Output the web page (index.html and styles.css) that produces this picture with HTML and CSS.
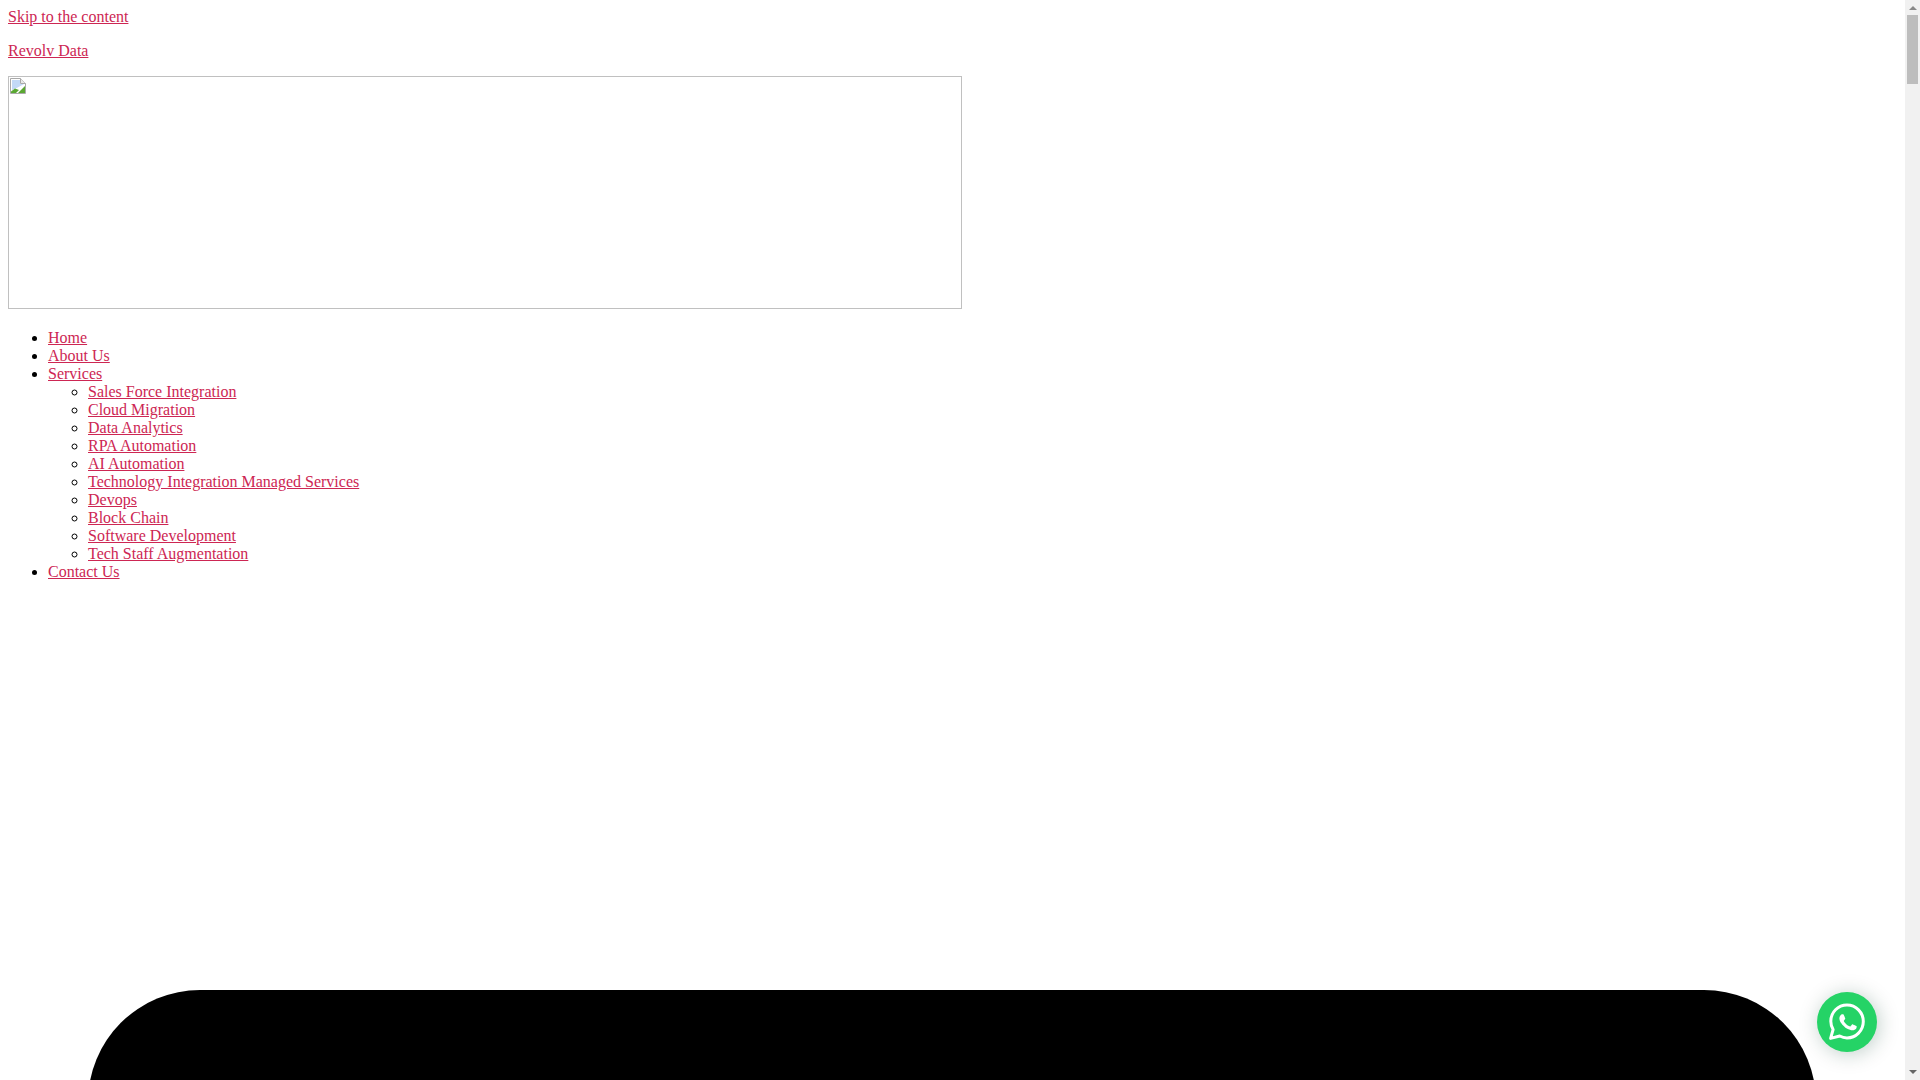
FILE: index.html
```
<!DOCTYPE html>
<html lang="en">
<head>
<meta charset="utf-8">
<title>Revolv Data</title>
<link rel="stylesheet" href="styles.css">
</head>
<body>
<div class="page">
  <a href="#content">Skip to the content</a>
  <p class="site-title"><a href="#home">Revolv Data</a></p>
  <div class="logo">
    <svg class="broken" width="16" height="16" viewBox="0 0 16 16" aria-hidden="true">
      <path d="M0.5 0.5H10.5L15.5 5.5V15.5H0.5Z" fill="#fff" stroke="#a9a9a9"/>
      <path d="M10.5 0.5V5.5H15.5" fill="#e8e8e8" stroke="#a9a9a9"/>
      <path d="M2 2H10V6H14V8L2 12Z" fill="#c3d9f7"/>
      <path d="M1 15V13L5 11L14 6V8L8 15Z" fill="#fff"/>
      <path d="M8 15L15 8V15Z" fill="#5aa832"/>
      <path d="M1 15V13.5L5 10.5L9 12L6 15Z" fill="#5aa832"/>
    </svg>
  </div>
  <ul class="menu">
    <li><a href="#home">Home</a></li>
    <li><a href="#about">About Us</a></li>
    <li><a href="#services">Services</a>
      <ul class="submenu">
        <li><a href="#s1">Sales Force Integration</a></li>
        <li><a href="#s2">Cloud Migration</a></li>
        <li><a href="#s3">Data Analytics</a></li>
        <li><a href="#s4">RPA Automation</a></li>
        <li><a href="#s5">AI Automation</a></li>
        <li><a href="#s6">Technology Integration Managed Services</a></li>
        <li><a href="#s7">Devops</a></li>
        <li><a href="#s8">Block Chain</a></li>
        <li><a href="#s9">Software Development</a></li>
        <li><a href="#s10">Tech Staff Augmentation</a></li>
      </ul>
    </li>
    <li><a href="#contact">Contact Us</a></li>
  </ul>
  <div class="big-shape"></div>
</div>
<a class="wa-button" href="#whatsapp" aria-label="WhatsApp">
  <svg class="wa-icon" width="40" height="40" viewBox="0 0 40 40" aria-hidden="true">
    <path class="wa-ring" d="M20 3C11 3 3.800 10.200 3.800 19.200c0 3 .8 5.800 2.300 8.300L3.600 36.400l9.100-2.400c2.200 1.200 4.700 1.900 7.300 1.900 9 0 16.300-7.300 16.300-16.400S29 3 20 3Z"/>
    <path class="wa-phone" transform="translate(3.200 3) scale(.85)" d="M14.300 10.900c-.4 0-1 .1-1.500.7-.6.600-2 1.900-2 4.300s1.800 4.900 2 5.200c.3.300 3.500 5.400 8.600 7.400 4.200 1.700 5.100 1.300 6 1.300.9-.1 3-1.200 3.400-2.400.4-1.200.4-2.200.3-2.400-.1-.2-.5-.4-1-.6-.5-.3-3-1.500-3.400-1.600-.5-.2-.8-.3-1.100.2-.3.500-1.300 1.600-1.600 2-.3.300-.6.400-1.100.1-.5-.3-2.100-.8-4-2.500-1.500-1.300-2.500-3-2.800-3.500-.3-.5 0-.8.200-1 .2-.2.5-.6.800-.9.300-.3.300-.5.500-.8.200-.3.100-.6 0-.9-.1-.2-1.100-2.700-1.600-3.700-.4-.9-.8-.9-1.100-.9Z"/>
  </svg>
</a>
<div class="scrollbar" aria-hidden="true">
  <span class="arrow-up"></span>
  <div class="thumb"></div>
  <span class="arrow-down"></span>
</div>
</body>
</html>
```
FILE: styles.css
```
html, body {
  height: 100%;
  overflow: hidden;
}
body {
  margin: 0;
  background: #fff;
  color: #000;
  font-family: "Liberation Serif", "Times New Roman", serif;
  font-size: 16px;
  line-height: 18px;
}
a {
  color: #cd2653;
}
.page {
  box-sizing: border-box;
  width: 1905px;
  height: 100vh;
  padding: 8px;
  overflow: hidden;
}
.site-title {
  margin: 16px 0;
}
.logo {
  box-sizing: border-box;
  width: 954px;
  height: 233px;
  border: 1px solid #c0c0c0;
  padding: 1px;
}
.broken {
  display: block;
}
.menu {
  margin: 20px 0 0;
  padding-left: 40px;
}
.submenu {
  margin: 0;
  padding-left: 40px;
}
.big-shape {
  width: 1728px;
  height: 1728px;
  margin: 409px 0 0 80px;
  background: #000;
  border-radius: 112px;
}
.wa-button {
  position: fixed;
  right: 43px;
  bottom: 28px;
  width: 60px;
  height: 60px;
  border-radius: 50%;
  background: #25d366;
  box-shadow: 2px 2px 20px rgba(0, 60, 40, 0.25);
  display: flex;
  align-items: center;
  justify-content: center;
}
.wa-ring {
  fill: none;
  stroke: #fff;
  stroke-width: 3px;
  stroke-linejoin: round;
}
.wa-phone {
  fill: #fff;
}
.scrollbar {
  position: fixed;
  top: 0;
  right: 0;
  bottom: 0;
  width: 15px;
  background: #f1f1f1;
  display: flex;
  flex-direction: column;
  align-items: center;
}
.arrow-up {
  margin-top: 6px;
  border: 4px solid transparent;
  border-top: 0;
  border-bottom: 4px solid #888;
}
.thumb {
  width: 11px;
  height: 69px;
  margin-top: 5px;
  background: #bdbdbd;
}
.arrow-down {
  margin-top: auto;
  margin-bottom: 6px;
  border: 4px solid transparent;
  border-bottom: 0;
  border-top: 4px solid #666;
}
```
